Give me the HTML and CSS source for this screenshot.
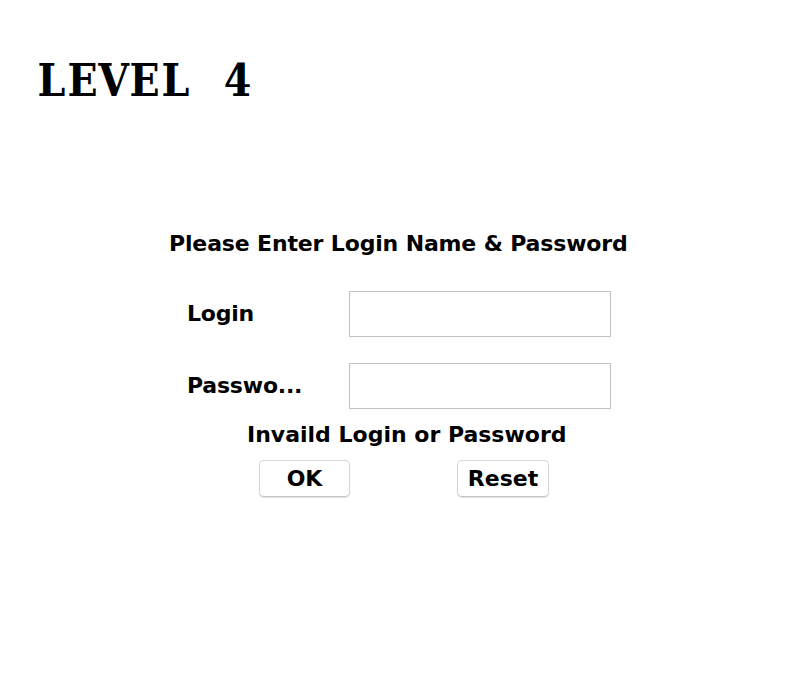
FILE: index.html
```html
<!DOCTYPE html>
<html>
<head>
<meta charset="utf-8">
<title>Level 4</title>
<link rel="stylesheet" href="styles.css">
</head>
<body>
<h1 class="title"><span class="ch">L</span><span class="ch">E</span><span class="ch">V</span><span class="ch">E</span><span class="ch">L</span><span class="ch"> </span><span class="ch">4</span></h1>
<form class="panel" onsubmit="return false">
  <div class="heading">Please Enter Login Name &amp; Password</div>
  <div class="row row-first">
    <label class="label" for="login">Login</label>
    <input class="field" id="login" type="text">
  </div>
  <div class="row row-second">
    <label class="label" for="pass">Passwo...</label>
    <input class="field" id="pass" type="password">
  </div>
  <div class="error">Invaild Login or Password</div>
  <div class="buttons">
    <button class="btn" type="button">OK</button>
    <button class="btn" type="reset">Reset</button>
  </div>
</form>
</body>
</html>
```
FILE: styles.css
```css
html, body {
  margin: 0;
  padding: 0;
  background: #ffffff;
}
body {
  width: 806px;
  height: 696px;
  color: #000;
  font-family: "DejaVu Sans", "Liberation Sans", sans-serif;
  font-weight: bold;
  font-size: 22px;
}
.title {
  display: flex;
  margin: 51px 0 0 0;
  padding-left: 36px;
  font-family: "DejaVu Serif", "Liberation Serif", serif;
  font-stretch: condensed;
  font-weight: bold;
  font-size: 44px;
  line-height: 60px;
  height: 60px;
  white-space: pre;
}
.ch {
  display: block;
  width: 31px;
  text-align: center;
}
.panel {
  margin: 120px 0 0 169px;
  width: 462px;
}
.heading {
  line-height: 26px;
  letter-spacing: -0.15px;
  white-space: nowrap;
}
.row {
  display: grid;
  grid-template-columns: 162px 262px;
  align-items: center;
  padding-left: 18px;
}
.row-first {
  margin-top: 34px;
}
.row-second {
  margin-top: 26px;
}
.label {
  line-height: 26px;
  letter-spacing: -0.2px;
  white-space: nowrap;
}
.field {
  box-sizing: border-box;
  width: 262px;
  height: 46px;
  margin: 0;
  border: 1px solid #c0c0c0;
  border-radius: 0;
  background: #fff;
  outline: none;
  padding: 0 6px;
  font: inherit;
  font-weight: normal;
  font-size: 16px;
}
.error {
  margin-top: 13px;
  padding-left: 78px;
  line-height: 26px;
  white-space: nowrap;
}
.buttons {
  display: flex;
  gap: 107px;
  margin-top: 12px;
  padding-left: 90px;
}
.btn {
  box-sizing: border-box;
  width: 91px;
  height: 37px;
  margin: 0;
  padding: 0;
  background: #fff;
  border: 1px solid #d6d6d6;
  border-bottom-color: #c4c4c4;
  border-radius: 5px;
  box-shadow: 0 1px 1px rgba(0, 0, 0, 0.12);
  color: #000;
  font-family: "DejaVu Sans", "Liberation Sans", sans-serif;
  font-weight: bold;
  font-size: 22px;
  line-height: 26px;
}
.btn + .btn {
  width: 92px;
}
```
